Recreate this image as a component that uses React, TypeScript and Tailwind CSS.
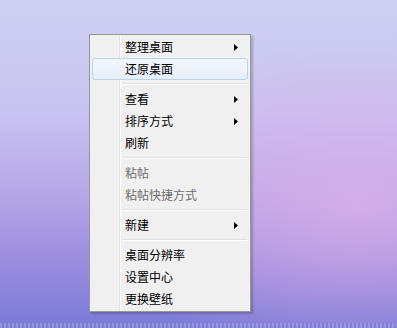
type Item =
  | { kind: "item"; label: string; sub?: boolean; disabled?: boolean; hover?: boolean }
  | { kind: "sep" };

const items: Item[] = [
  { kind: "item", label: "整理桌面", sub: true },
  { kind: "item", label: "还原桌面", hover: true },
  { kind: "sep" },
  { kind: "item", label: "查看", sub: true },
  { kind: "item", label: "排序方式", sub: true },
  { kind: "item", label: "刷新" },
  { kind: "sep" },
  { kind: "item", label: "粘帖", disabled: true },
  { kind: "item", label: "粘帖快捷方式", disabled: true },
  { kind: "sep" },
  { kind: "item", label: "新建", sub: true },
  { kind: "sep" },
  { kind: "item", label: "桌面分辨率" },
  { kind: "item", label: "设置中心" },
  { kind: "item", label: "更换壁纸" },
];

const Arrow = () => (
  <svg width="4" height="7" viewBox="0 0 4 7" className="mr-[9px]">
    <path d="M0 0 L4 3.5 L0 7 Z" fill="#000" />
  </svg>
);

const ContextMenu = () => (
  <div className="absolute left-[89px] top-[34px] w-[162px] border border-[#979797] bg-[#f0f0f0] p-px shadow-[2px_2px_2px_rgba(0,0,0,0.2)]">
    <div className="absolute left-[29px] top-0 bottom-0 w-px bg-[#e2e3e3]" />
    <div className="absolute left-[30px] top-0 bottom-0 w-px bg-white" />
    <div className="relative flex flex-col">
      {items.map((it, i) =>
        it.kind === "sep" ? (
          <div key={i} className="h-[8px] flex flex-col justify-center pl-[31px] pr-[2px]">
            <div className="h-px bg-[#e0e0e0]" />
            <div className="h-px bg-white" />
          </div>
        ) : (
          <div
            key={i}
            className={
              it.hover
                ? "h-[22px] mx-px flex items-center justify-between rounded-[3px] border border-[#b8d2f2] bg-[linear-gradient(to_bottom,#f3f7fc,#e8eff9)] pl-[32px]"
                : "h-[22px] mx-px flex items-center justify-between border border-transparent pl-[32px]"
            }
          >
            <span
              className={
                it.disabled
                  ? "text-[12px] leading-none text-[#6d6d6d]"
                  : "text-[12px] leading-none text-black"
              }
            >
              {it.label}
            </span>
            {it.sub && <Arrow />}
          </div>
        )
      )}
    </div>
  </div>
);

export default function App() {
  return (
    <div
      className="relative w-[397px] h-[328px] overflow-hidden bg-[radial-gradient(ellipse_at_90%_62%,rgba(222,176,232,0.75),transparent_55%),linear-gradient(to_bottom,#cdd0f2_0%,#c8c2f0_35%,#b4a6e6_60%,#9a8cde_80%,#7a7ad6_100%)]"
      style={{ fontFamily: '"Noto Sans CJK SC", "Noto Sans", sans-serif' }}
    >
      <ContextMenu />
      <div className="absolute left-0 right-0 bottom-0 h-[5px] bg-[#8b8bdc] bg-[repeating-linear-gradient(to_right,#9c9ce2_0px,#9c9ce2_2px,#7f7fd4_2px,#7f7fd4_4px)] opacity-80" />
    </div>
  );
}
